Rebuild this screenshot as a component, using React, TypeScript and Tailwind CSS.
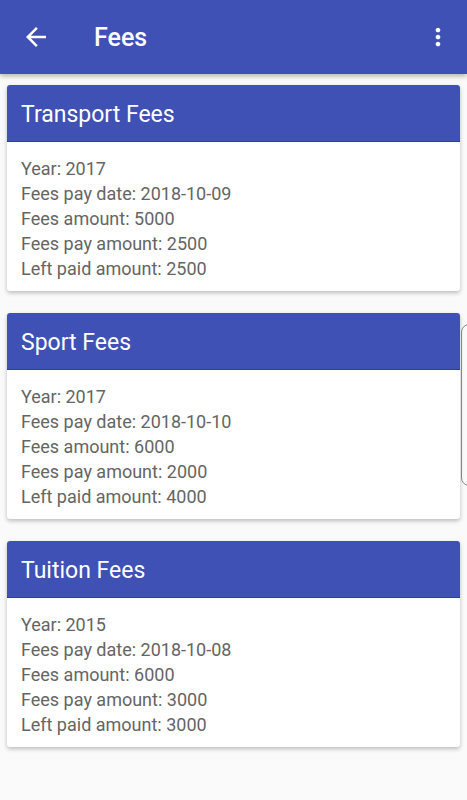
import React from "react";

const cards = [
  { title: "Transport Fees", year: "2017", date: "2018-10-09", amount: "5000", pay: "2500", left: "2500" },
  { title: "Sport Fees", year: "2017", date: "2018-10-10", amount: "6000", pay: "2000", left: "4000" },
  { title: "Tuition Fees", year: "2015", date: "2018-10-08", amount: "6000", pay: "3000", left: "3000" },
];

export default function App() {
  return (
    <div className="relative w-[467px] h-[800px] bg-[#fafafa] overflow-hidden" style={{ fontFamily: "Roboto, 'Noto Sans', sans-serif" }}>
      <div className="relative z-10 h-[74px] bg-[#3f51b5] flex items-center shadow-[0_2px_5px_rgba(0,0,0,0.3)]">
        <div className="w-[74px] flex items-center justify-center">
          <svg width="30" height="30" viewBox="0 0 24 24" className="ml-[-2px]">
            <path d="M20 11H7.83l5.59-5.59L12 4l-8 8 8 8 1.41-1.41L7.83 13H20v-2z" fill="#ffffff" />
          </svg>
        </div>
        <div className="ml-[20px] text-white text-[25px] font-medium pt-[2px]">Fees</div>
        <div className="ml-auto mr-[15px] flex items-center">
          <svg width="28" height="28" viewBox="0 0 24 24">
            <path d="M12 8c1.1 0 2-.9 2-2s-.9-2-2-2-2 .9-2 2 .9 2 2 2zm0 2c-1.1 0-2 .9-2 2s.9 2 2 2 2-.9 2-2-.9-2-2-2zm0 6c-1.1 0-2 .9-2 2s.9 2 2 2 2-.9 2-2-.9-2-2-2z" fill="#ffffff" />
          </svg>
        </div>
      </div>
      <div className="flex flex-col gap-[22px] pt-[11px] px-[7px]">
        {cards.map((c) => (
          <div key={c.title} className="bg-white rounded-[3px] shadow-[0_2px_4px_rgba(0,0,0,0.25)] overflow-hidden h-[206px]">
            <div className="h-[57px] bg-[#3f51b5] flex items-center px-[14px] pt-[5px] text-white text-[23px] border-b border-[#2e3d99]">
              {c.title}
            </div>
            <div className="px-[14px] pt-[14px] text-[18px] leading-[25px] text-[#656565]">
              <div>Year: {c.year}</div>
              <div>Fees pay date: {c.date}</div>
              <div>Fees amount: {c.amount}</div>
              <div>Fees pay amount: {c.pay}</div>
              <div>Left paid amount: {c.left}</div>
            </div>
          </div>
        ))}
      </div>
      <div className="absolute left-[461px] top-[324px] w-[10px] h-[162px] rounded-l-[8px] border border-[#888] bg-transparent" />
    </div>
  );
}
